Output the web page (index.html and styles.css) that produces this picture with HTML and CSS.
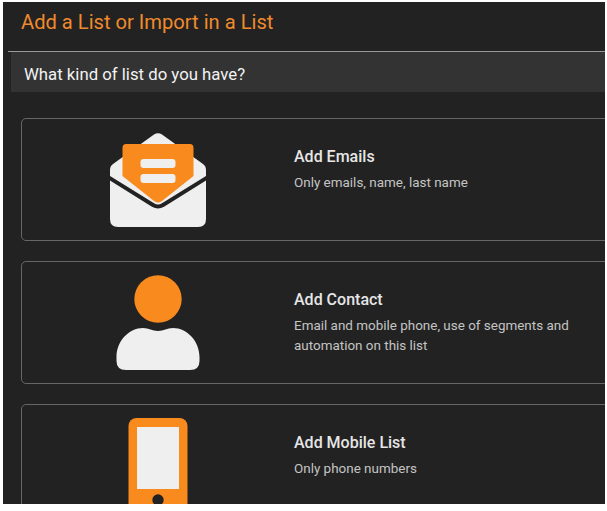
FILE: index.html
```html
<!DOCTYPE html>
<html lang="en">
<head>
  <meta charset="UTF-8" />
  <title>Add a List</title>
  <link rel="stylesheet" href="styles.css">
</head>
<body>
  <div class="panel">
    <h1 class="title">Add a List or Import in a List</h1>
    <h2 class="subtitle">What kind of list do you have?</h2>

    <div class="cards">
      <div class="card">
        <div class="card-icon">
          <svg class="icon-mail" viewBox="0 0 96 94">
            <path fill="#efefef" d="M44 1.5 Q48 -1 52 1.5 L93 31 Q96 33 96 37 V86 Q96 94 88 94 H8 Q0 94 0 86 V37 Q0 33 3 31 Z" />
            <path fill="none" stroke="#222" stroke-width="4" d="M-2 44 L43 72 Q48 75 53 72 L98 44" />
            <path fill="#f98a1d" d="M16 11 H80 Q83.5 11 83.5 15 V43 L52 68 Q48 71 44 68 L12.5 43 V15 Q12.5 11 16 11 Z" />
            <rect fill="#efefef" x="30.5" y="26" width="35" height="9" rx="3" />
            <rect fill="#efefef" x="30.5" y="41" width="35" height="9" rx="3" />
          </svg>
        </div>
        <div class="card-text">
          <h3>Add Emails</h3>
          <p>Only emails, name, last name</p>
        </div>
      </div>

      <div class="card">
        <div class="card-icon">
          <svg class="icon-person" viewBox="0 0 84 96">
            <circle fill="#f98a1d" cx="42" cy="24" r="23.7" />
            <path fill="#efefef" d="M0.5 82 C0.5 66 13 53 27 53 C33 53 36 56 42 56 C48 56 51 53 57 53 C71 53 83.5 66 83.5 82 V86 Q83.5 95 74 95 H10 Q0.5 95 0.5 86 Z" />
          </svg>
        </div>
        <div class="card-text">
          <h3>Add Contact</h3>
          <p>Email and mobile phone, use of segments and automation on this list</p>
        </div>
      </div>

      <div class="card">
        <div class="card-icon">
          <svg class="icon-phone" viewBox="0 0 60 104">
            <rect fill="#f98a1d" x="0.5" y="0" width="59" height="104" rx="8" />
            <rect fill="#efefef" x="9" y="9" width="42" height="62" />
            <circle fill="#222" cx="30" cy="82" r="5.7" />
          </svg>
        </div>
        <div class="card-text">
          <h3>Add Mobile List</h3>
          <p>Only phone numbers</p>
        </div>
      </div>
    </div>
  </div>
</body>
</html>
```

FILE: styles.css
```css
body {
  margin: 0;
  background: #fff;
  font-family: Roboto, "Liberation Sans", sans-serif;
}

.panel {
  width: 602px;
  height: 502px;
  margin: 2px 0 0 3px;
  background: #222;
  overflow: hidden;
}

.title {
  margin: 0 0 0 5px;
  height: 50px;
  padding-left: 13px;
  box-sizing: border-box;
  border-bottom: 1px solid #999;
  font-size: 20.15px;
  font-weight: 400;
  line-height: 41px;
  color: #f08a2c;
}

.subtitle {
  margin: 0 0 0 8px;
  height: 40px;
  padding-left: 13px;
  background: #333;
  font-size: 16.75px;
  font-weight: 400;
  line-height: 45px;
  color: #f2f2f2;
}

.cards {
  display: flex;
  flex-direction: column;
  gap: 20px;
  padding: 26px 0 0 18px;
}

.card {
  display: flex;
  width: 620px;
  height: 123px;
  flex-shrink: 0;
  box-sizing: border-box;
  padding-top: 13px;
  border: 1px solid #666;
  border-radius: 5px;
}

.card-icon {
  display: flex;
  justify-content: center;
  width: 272px;
}

.icon-mail {
  width: 96px;
  height: 94px;
  margin-top: 1px;
}

.icon-person {
  width: 84px;
  height: 96px;
}

.icon-phone {
  width: 60px;
  height: 104px;
}

.card-text {
  width: 285px;
  padding-top: 15px;
}

.card-text h3 {
  margin: 0 0 6px;
  font-size: 16px;
  font-weight: 500;
  line-height: 20px;
  color: #e6e6e6;
}

.card-text p {
  margin: 0;
  font-size: 13.45px;
  line-height: 20px;
  color: #c4c4c4;
}
```
